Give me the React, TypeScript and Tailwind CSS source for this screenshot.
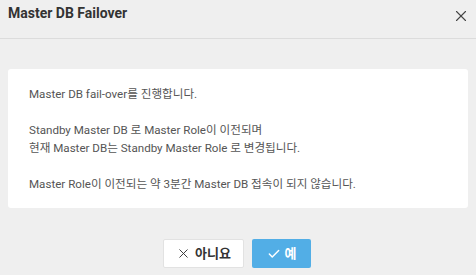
import React from 'react';
import { X, Check } from 'lucide-react';

const FONT = { fontFamily: 'Roboto, "Noto Sans CJK KR", sans-serif' };

export default function App() {
  return (
    <div className="w-[476px] h-[275px] bg-[#efefef] flex flex-col overflow-hidden" style={FONT}>
      {/* header */}
      <div className="h-[39px] flex items-start justify-between border-b border-[#dcdcdc] pl-2 pr-[6px]">
        <h1 className="text-[14px] leading-[26px] font-bold text-[#333]">Master DB Failover</h1>
        <button className="mt-[7px] text-[#444]">
          <X size={18} strokeWidth={1.5} />
        </button>
      </div>

      {/* body */}
      <div className="px-2 pt-[30px]">
        <div className="bg-white rounded-[3px] h-[139px] pl-[21px] pt-[16px] text-[11.6px] leading-[18px] text-[#555]">
          <p>Master DB fail-over를 진행합니다.</p>
          <p className="mt-[18px]">Standby Master DB 로 Master Role이 이전되며</p>
          <p>현재 Master DB는 Standby Master Role 로 변경됩니다.</p>
          <p className="mt-[18px]">Master Role이 이전되는 약 3분간 Master DB 접속이 되지 않습니다.</p>
        </div>
      </div>

      {/* footer */}
      <div className="flex justify-center gap-[8px] mt-[31px] pr-[2px]">
        <button className="w-[81px] h-[29px] bg-white border border-[#e2e2e2] rounded-[2px] flex items-center justify-center gap-1 text-[13px] font-bold text-[#333]">
          <X size={15} strokeWidth={1.5} />
          아니요
        </button>
        <button className="w-[59px] h-[29px] bg-[#52aee6] rounded-[2px] flex items-center justify-center gap-1 text-[13px] font-bold text-white">
          <Check size={14} strokeWidth={2.5} />
          예
        </button>
      </div>
    </div>
  );
}
